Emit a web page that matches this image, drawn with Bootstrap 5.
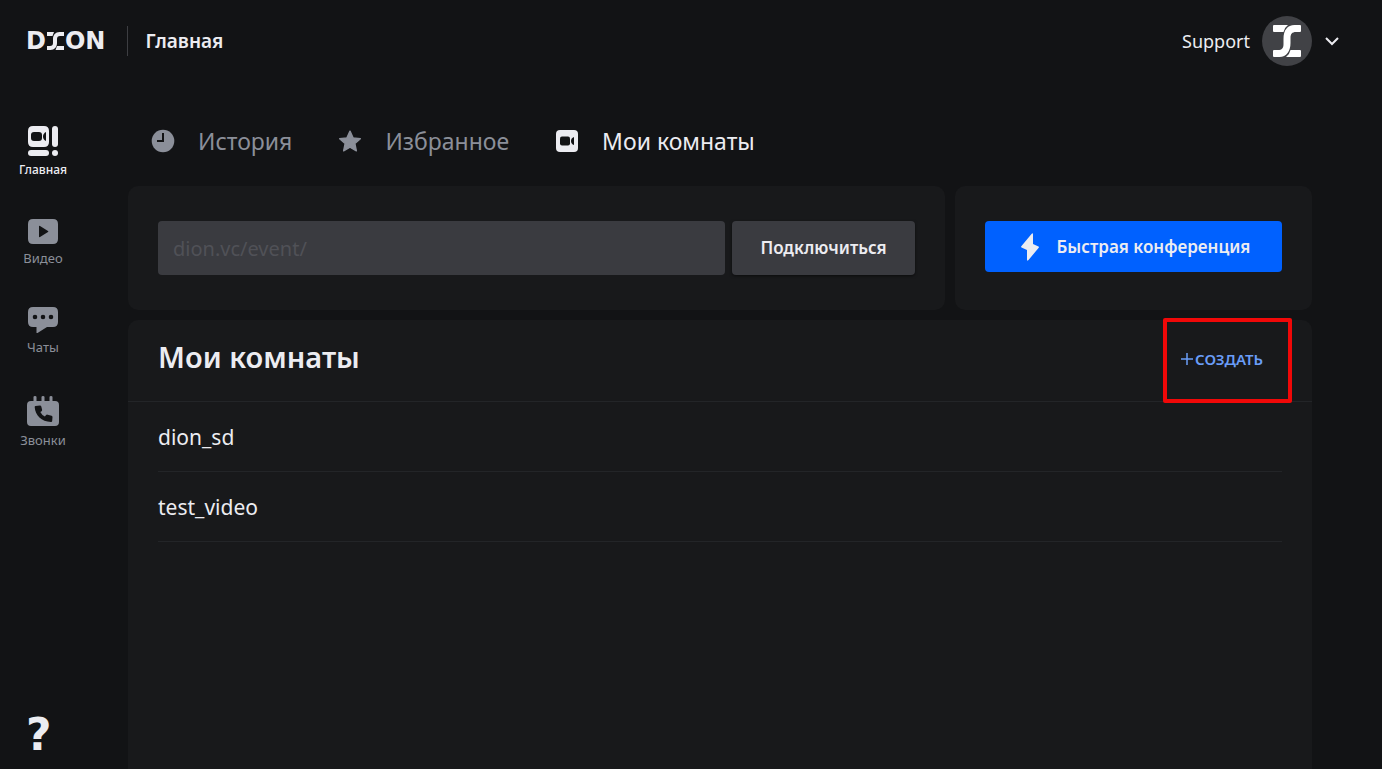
<!DOCTYPE html>
<html lang="ru" data-bs-theme="dark">
<head>
<meta charset="utf-8">
<meta name="viewport" content="width=device-width, initial-scale=1">
<title>DION — Главная</title>
<link href="https://cdn.jsdelivr.net/npm/bootstrap@5.3.0/dist/css/bootstrap.min.css" rel="stylesheet">
<style>
  :root { --ink: #ececf1; --muted: #8b8f99; --panel: #18191b; --field: #3a3b40; --line: #232528; }
  body { background: #121315; color: var(--ink); font-family: "Noto Sans", "Open Sans", sans-serif; font-size: 18px; line-height: 24px; }
  svg { display: block; flex: none; }
  .topbar { height: 82px; padding: 0 38px 0 26px; }
  .brand { font: 700 24px/24px "DejaVu Sans", sans-serif; color: var(--ink); gap: 1px; }
  .page-title { font-size: 19px; line-height: 24px; font-weight: 600; border-left: 1px solid #3d3e42; padding: 3px 0 3px 17px; margin: 0 0 0 22px; }
  .account { font-size: 18px; color: var(--ink); }
  .avatar { width: 50px; height: 50px; background: #414246; margin: 0 8px 0 12px; }
  .side { width: 86px; margin-right: 42px; padding-top: 44px; gap: 39px; }
  .side-link { color: var(--muted); font-size: 13px; line-height: 20px; gap: 4px; }
  .side-link.active { color: var(--ink); font-size: 12px; font-weight: 500; }
  .help { font: 700 44px/44px "DejaVu Sans", sans-serif; color: var(--ink); margin: auto 0 12px 26px; }
  .content { margin-right: 70px; gap: 10px; }
  .tabs { height: 94px; padding: 24px 0 0 23px; gap: 46px; }
  .tab-link { color: var(--muted); font-size: 23px; line-height: 30px; gap: 23px; }
  .tab-link.active { color: var(--ink); }
  .tiles { gap: 10px; }
  .tile { background: var(--panel); border-radius: 10px; }
  .tile-pad { padding: 35px 30px; }
  .tile-quick { width: 357px; }
  .join { gap: 7px; }
  .join .form-control { height: 54px; background: var(--field); border: 0; border-radius: 4px; font-size: 20px; padding: 0 15px; color: var(--ink); }
  .join .form-control::placeholder { color: #505157; opacity: 1; }
  .btn-join { width: 183px; height: 54px; background: var(--field); color: var(--ink); border: 0; border-radius: 4px; font-size: 17px; font-weight: 600; box-shadow: 0 1px 3px #0008; }
  .btn-quick { height: 51px; background: #0061ff; color: var(--ink); border: 0; border-radius: 4px; font-size: 17px; font-weight: 600; gap: 18px; padding: 0 12px 0 16px; }
  .rooms-head { height: 82px; padding: 0 30px 8px; border-bottom: 1px solid var(--line); }
  .rooms-head h1 { font-size: 29px; line-height: 36px; font-weight: 600; color: var(--ink); }
  .btn-create { color: #6a9df8; border: 0; font-size: 15px; line-height: 20px; font-weight: 600; padding: 10px 19px 6px; gap: 1px; }
  .highlight { top: -2px; bottom: -2px; right: 20px; width: 129px; border: 4px solid #f00808; border-radius: 2px; pointer-events: none; }
  .rooms { padding: 0 30px; }
  .room { height: 70px; border-bottom: 1px solid var(--line); color: var(--ink); font-size: 21px; line-height: 28px; }
</style>
</head>
<body>
<div class="d-flex flex-column min-vh-100">
  <header class="topbar d-flex align-items-center">
    <a href="#" class="brand d-flex align-items-center text-decoration-none" aria-label="DION">
      <span>D</span>
      <svg width="17" height="18" viewBox="0 0 17 18" fill="currentColor"><path d="M0 0h7L5.500 4H0zM10 14h7v4H8.500zM17 0v4h-4c-2 0-3 1-3 3v4c0 4-2.500 7-6.500 7H0v-4h3c2 0 3-1 3-3V7c0-4 2.500-7 6.500-7z"/></svg>
      <span>ON</span>
    </a>
    <div class="page-title">Главная</div>
    <button class="account btn p-0 border-0 ms-auto d-flex align-items-center">
      <span>Support</span>
      <span class="avatar rounded-circle d-flex align-items-center justify-content-center">
        <svg width="28" height="32" viewBox="0 0 28 32" fill="#fff"><path d="M1 0h14q-3.500 2.500-4.500 7H1q-1 0-1-1V1q0-1 1-1zM27 32H13q3.500-2.500 4.500-7H27q1 0 1 1v5q0 1-1 1zM27 0q1 0 1 1v5q0 1-1 1h-4c-4 0-5.500 2-5.500 6v5c0 8-4 14-11 14H1q-1 0-1-1v-5q0-1 1-1h4c4 0 5.500-2 5.500-6v-5C10.500 5 14.500 0 21.500 0z"/></svg>
      </span>
      <svg width="24" height="24" viewBox="0 0 24 24" fill="none" stroke="currentColor" stroke-width="2"><path d="M6 9l6 6 6-6"/></svg>
    </button>
  </header>

  <div class="d-flex flex-grow-1">
    <nav class="side d-flex flex-column flex-shrink-0">
      <a href="#" class="side-link active d-flex flex-column align-items-center text-decoration-none">
        <svg width="30" height="30" viewBox="0 0 30 30" fill="currentColor"><path fill-rule="evenodd" d="M5 0h11q5 0 5 5v11q0 5-5 5H5q-5 0-5-5V5q0-5 5-5zM6 6q-3 0-3 3v3q0 3 3 3h5q3 0 3-3V9q0-3-3-3zM18 6q-3 1.500-3 4.500t3 4.500z"/><rect x="24" width="6" height="21" rx="3"/><rect y="24" width="21" height="6" rx="3"/><circle cx="27" cy="27" r="3"/></svg>
        Главная
      </a>
      <a href="#" class="side-link d-flex flex-column align-items-center text-decoration-none">
        <svg width="30" height="25" viewBox="0 0 30 25" fill="currentColor"><path fill-rule="evenodd" d="M5 0h20q5 0 5 5v15q0 5-5 5H5q-5 0-5-5V5q0-5 5-5zM11 7.500v10q0 1 1 .5l8-5q.8-.5 0-1l-8-5q-1-.5-1 .5z"/></svg>
        Видео
      </a>
      <a href="#" class="side-link d-flex flex-column align-items-center text-decoration-none">
        <svg width="30" height="26" viewBox="0 0 30 26" fill="currentColor"><path fill-rule="evenodd" d="M5 0h20q5 0 5 5v10q0 5-5 5h-6l-9.500 6q-1 .3-1-.6V20H5q-5 0-5-5V5q0-5 5-5zM4.700 10a2.300 2.300 0 1 0 4.600 0 2.300 2.300 0 1 0-4.600 0zM12.700 10a2.300 2.300 0 1 0 4.600 0 2.300 2.300 0 1 0-4.600 0zM20.700 10a2.300 2.300 0 1 0 4.600 0 2.300 2.300 0 1 0-4.600 0z"/></svg>
        Чаты
      </a>
      <a href="#" class="side-link d-flex flex-column align-items-center text-decoration-none">
        <svg width="32" height="30" viewBox="0 0 32 30"><path fill="currentColor" d="M6.500 1q0-1 1.500-1t1.500 1v4h5V1q0-1 1.500-1t1.500 1v4h5V1q0-1 1.500-1t1.500 1v4H28q4 0 4 4v17q0 4-4 4H4q-4 0-4-4V9q0-4 4-4h2.500z"/><path fill="#121315" d="M8.500 10l4.500-.6q1 0 1.300 1l.8 3.300q.2.900-.5 1.500L13.300 16q1.400 3 4.600 4.400l1.200-1.300q.6-.7 1.500-.4l4 1q.9.300.9 1.200l-.3 4.100q-.2 1-1.200.9C14.500 25.600 8.100 19.500 7.700 11q0-.9.800-1z"/></svg>
        Звонки
      </a>
      <button class="help btn p-0 border-0 align-self-start" aria-label="Помощь">?</button>
    </nav>

    <main class="content flex-grow-1 d-flex flex-column">
      <nav class="tabs d-flex align-items-center">
        <a href="#" class="tab-link d-flex align-items-center text-decoration-none">
          <svg width="24" height="24" viewBox="0 0 24 24"><circle cx="12" cy="12" r="11.300" fill="currentColor"/><path d="M12 4v8H6" fill="none" stroke="#121315" stroke-width="2"/></svg>
          История
        </a>
        <a href="#" class="tab-link d-flex align-items-center text-decoration-none">
          <svg width="24" height="24" viewBox="0 0 26 24" fill="currentColor" stroke="currentColor" stroke-width="1.500" stroke-linejoin="round"><path d="M13 1.300l3.300 7.300 7.900.9-5.900 5.300 1.600 7.900-6.900-4-6.900 4 1.600-7.900-5.900-5.300 7.900-.9z"/></svg>
          Избранное
        </a>
        <a href="#" class="tab-link active d-flex align-items-center text-decoration-none">
          <svg width="24" height="24" viewBox="0 0 24 24"><rect x="1" y="1" width="22" height="22" rx="4" fill="currentColor"/><rect x="5" y="7.500" width="10" height="9" rx="2" fill="#121315"/><path fill="#121315" d="M19 8v8q-3-1-3-4t3-4z"/></svg>
          Мои комнаты
        </a>
      </nav>

      <div class="tiles d-flex">
        <form class="tile tile-pad join d-flex flex-grow-1">
          <input type="text" class="form-control" placeholder="dion.vc/event/" aria-label="Адрес конференции">
          <button type="button" class="btn btn-join flex-shrink-0">Подключиться</button>
        </form>
        <section class="tile tile-pad tile-quick flex-shrink-0">
          <button class="btn btn-quick w-100 d-flex align-items-center justify-content-center">
            <svg width="18" height="28" viewBox="0 0 18 28" fill="currentColor"><path d="M10.500 1q1.500-1.500 1.500.5V11l5.500 2.500q.8.500.2 1.300L7.500 27q-1.500 1.500-1.500-.5V17L.5 14.500q-.8-.5-.2-1.300z"/></svg>
            Быстрая конференция
          </button>
        </section>
      </div>

      <section class="tile rounded-bottom-0 flex-grow-1">
        <div class="rooms-head position-relative d-flex align-items-center justify-content-between">
          <h1 class="m-0">Мои комнаты</h1>
          <button class="btn btn-create d-flex align-items-center">
            <svg width="14" height="14" viewBox="0 0 14 14" stroke="currentColor" stroke-width="1.500"><path d="M7 1v12M1 7h12"/></svg>
            СОЗДАТЬ
          </button>
          <span class="highlight position-absolute"></span>
        </div>
        <ul class="rooms list-unstyled m-0">
          <li><a href="#" class="room d-flex align-items-center text-decoration-none">dion_sd</a></li>
          <li><a href="#" class="room d-flex align-items-center text-decoration-none">test_video</a></li>
        </ul>
      </section>
    </main>
  </div>
</div>
<script src="https://cdn.jsdelivr.net/npm/bootstrap@5.3.0/dist/js/bootstrap.bundle.min.js"></script>
</body>
</html>
